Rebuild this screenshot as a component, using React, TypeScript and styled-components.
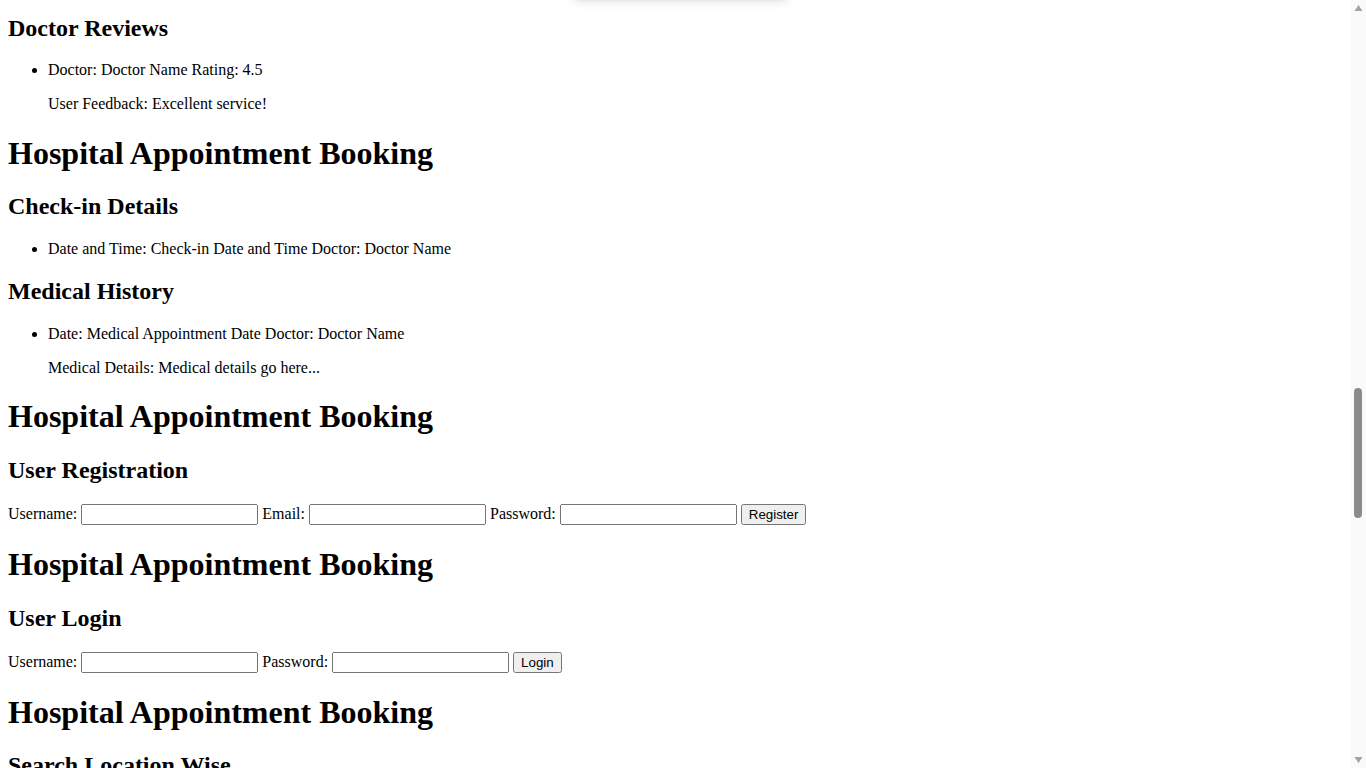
import React from "react";
import styled, { createGlobalStyle } from "styled-components";

const Global = createGlobalStyle`
  body {
    margin: 0 8px 8px;
    font-family: "Liberation Serif", "Times New Roman", serif;
    font-size: 16px;
    color: #000;
    background: #fff;
  }
`;

const Page = styled.div`
  padding-right: 15px;
`;

const PageTitle = styled.h1`
  font-size: 32px;
  font-weight: bold;
  margin: 21.44px 0;
`;

const SectionTitle = styled.h2<{ $first?: boolean }>`
  font-size: 24px;
  font-weight: bold;
  margin: ${(p) => (p.$first ? "14.5px" : "19.92px")} 0 19.92px;
`;

const List = styled.ul`
  margin: 16px 0;
  padding-left: 40px;
  list-style: disc;
`;

const Item = styled.li``;

const Para = styled.p`
  margin: 16px 0;
`;

const Form = styled.form`
  margin: 0 0 16px;
`;

const Label = styled.label``;

const Input = styled.input`
  box-sizing: border-box;
  width: 177px;
  height: 21px;
  font-family: "Liberation Sans", Arial, sans-serif;
  font-size: 13.333px;
`;

const Button = styled.button`
  font-family: "Liberation Sans", Arial, sans-serif;
  font-size: 13.333px;
`;

const ToastShadow = styled.div`
  position: fixed;
  top: -48px;
  left: 572px;
  width: 218px;
  height: 48px;
  background: #fff;
  border-radius: 8px;
  box-shadow: 0 3px 10px rgba(0, 0, 0, 0.08), 0 2px 3px rgba(0, 0, 0, 0.04);
  z-index: 10;
`;

const ScrollTrack = styled.div`
  position: fixed;
  top: 0;
  right: 0;
  bottom: 0;
  width: 15px;
  background: #fafafa;
  z-index: 20;
`;

const ScrollArrow = styled.svg<{ $pos: "top" | "bottom" }>`
  position: absolute;
  left: 3px;
  ${(p) => (p.$pos === "top" ? "top: 4px;" : "bottom: 4px;")}
  width: 9px;
  height: 8px;
`;

const ScrollThumb = styled.div`
  position: absolute;
  left: 3px;
  top: 388px;
  width: 8px;
  height: 130px;
  border-radius: 4px;
  background: #8b8b8b;
`;

type Field = { label: string; type?: string };

const FormRow: React.FC<{ fields: Field[]; action: string }> = ({ fields, action }) => (
  <Form onSubmit={(e) => e.preventDefault()}>
    {fields.map((f) => (
      <React.Fragment key={f.label}>
        <Label>{f.label}: </Label>
        <Input type={f.type ?? "text"} />{" "}
      </React.Fragment>
    ))}
    <Button type="submit">{action}</Button>
  </Form>
);

export default function App() {
  return (
    <Page>
      <Global />
      <ToastShadow />
      <ScrollTrack>
        <ScrollArrow $pos="top" viewBox="0 0 9 8">
          <polygon points="4.5,1 8.5,7 0.5,7" fill="#a3a3a3" />
        </ScrollArrow>
        <ScrollThumb />
        <ScrollArrow $pos="bottom" viewBox="0 0 9 8">
          <polygon points="0.5,1 8.5,1 4.5,7" fill="#a3a3a3" />
        </ScrollArrow>
      </ScrollTrack>

      <SectionTitle $first>Doctor Reviews</SectionTitle>
      <List>
        <Item>
          Doctor: Doctor Name Rating: 4.5
          <Para>User Feedback: Excellent service!</Para>
        </Item>
      </List>

      <PageTitle>Hospital Appointment Booking</PageTitle>
      <SectionTitle>Check-in Details</SectionTitle>
      <List>
        <Item>Date and Time: Check-in Date and Time Doctor: Doctor Name</Item>
      </List>
      <SectionTitle>Medical History</SectionTitle>
      <List>
        <Item>
          Date: Medical Appointment Date Doctor: Doctor Name
          <Para>Medical Details: Medical details go here...</Para>
        </Item>
      </List>

      <PageTitle>Hospital Appointment Booking</PageTitle>
      <SectionTitle>User Registration</SectionTitle>
      <FormRow
        fields={[{ label: "Username" }, { label: "Email", type: "email" }, { label: "Password", type: "password" }]}
        action="Register"
      />

      <PageTitle>Hospital Appointment Booking</PageTitle>
      <SectionTitle>User Login</SectionTitle>
      <FormRow fields={[{ label: "Username" }, { label: "Password", type: "password" }]} action="Login" />

      <PageTitle>Hospital Appointment Booking</PageTitle>
      <SectionTitle>Search Location Wise</SectionTitle>
      <FormRow fields={[{ label: "Location" }]} action="Search" />
    </Page>
  );
}
